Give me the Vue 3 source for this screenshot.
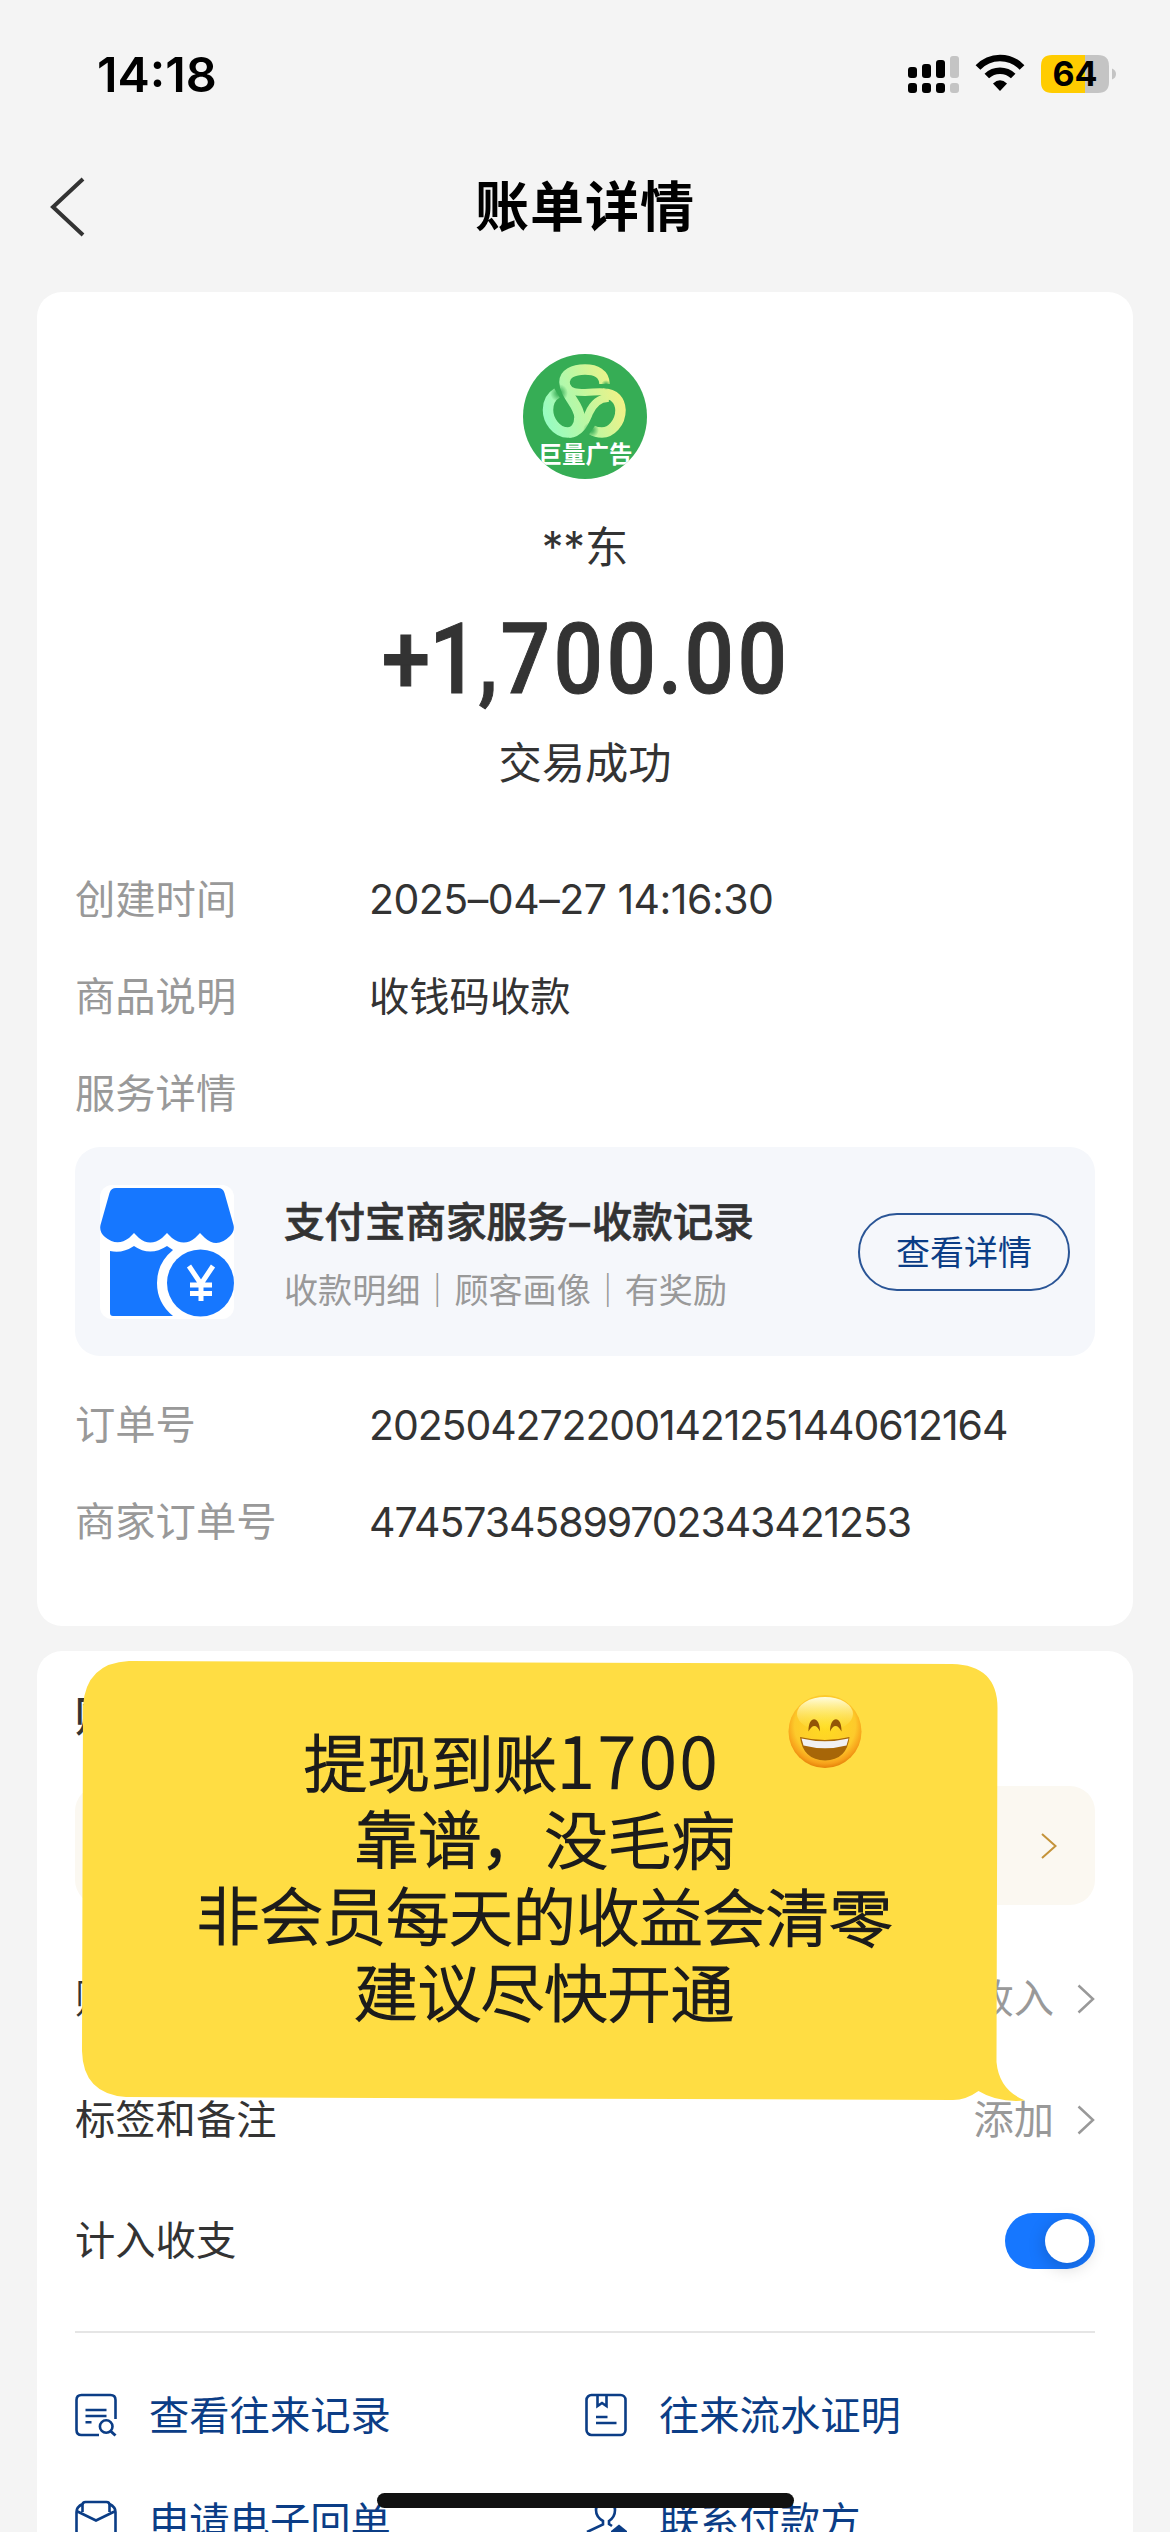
<script setup>
import { ref } from 'vue'

const createdRows = [
  { label: '创建时间', value: '2025–04–27 14:16:30', kind: 'date' },
  { label: '商品说明', value: '收钱码收款', kind: 'plain' },
  { label: '服务详情', value: '', kind: 'plain' },
]
const orderRows = [
  { label: '订单号', value: '2025042722001421251440612164', kind: 'num' },
  { label: '商家订单号', value: '47457345899702343421253', kind: 'num' },
]
const noteLines = ['靠谱，没毛病', '非会员每天的收益会清零', '建议尽快开通']
const counted = ref(true)
</script>

<template>
  <main class="screen">
    <header class="status">
      <span class="clock">14:18</span>
      <svg class="status-icons" width="210" height="40" viewBox="0 0 210 40">
        <g fill="#000">
          <rect x="0" y="13" width="9" height="11" rx="3" />
          <rect x="14" y="10" width="9" height="14" rx="3" />
          <rect x="28" y="6" width="9" height="18" rx="3" />
          <rect x="0" y="29" width="9" height="10" rx="3" />
          <rect x="14" y="29" width="9" height="10" rx="3" />
          <rect x="28" y="29" width="9" height="10" rx="3" />
        </g>
        <g fill="#c4c4c4">
          <rect x="42" y="2" width="9" height="22" rx="3" />
          <rect x="42" y="29" width="9" height="10" rx="3" />
        </g>
        <path d="M70 13.500A30 30 0 0 1 114 13.500" fill="none" stroke="#000" stroke-width="6.500" />
        <path d="M78.800 22A19 19 0 0 1 105.200 22" fill="none" stroke="#000" stroke-width="6.500" />
        <path d="M85 29.500Q92 23 99 29.500L92 37Z" fill="#000" />
        <path d="M144 1H177V39H144Q133 39 133 28V12Q133 1 144 1Z" fill="#ffcc00" />
        <path d="M177 1H190Q201 1 201 12V28Q201 39 190 39H177Z" fill="#c4c4c4" />
        <path d="M204 14.500Q208 16 208 20T204 25.500Z" fill="#c4c4c4" />
        <text x="167" y="32" text-anchor="middle" class="battery-text">64</text>
      </svg>
    </header>

    <nav class="titlebar">
      <svg class="back" width="38" height="60" viewBox="0 0 38 60">
        <path d="M35 2L5 30L35 58" fill="none" stroke="#333" stroke-width="4" />
      </svg>
      <h1>账单详情</h1>
    </nav>

    <section class="card bill">
      <svg class="avatar" width="124" height="125" viewBox="0 0 124 125">
        <defs>
          <linearGradient id="ribbon" gradientUnits="userSpaceOnUse" x1="24" y1="68" x2="98" y2="42">
            <stop offset="0" stop-color="#98fcc1" />
            <stop offset=".5" stop-color="#bdf7a2" />
            <stop offset="1" stop-color="#f0f287" />
          </linearGradient>
          <radialGradient id="shade">
            <stop offset="0" stop-color="#36ad55" />
            <stop offset=".3" stop-color="#36ad55" stop-opacity=".8" />
            <stop offset="1" stop-color="#36ad55" stop-opacity="0" />
          </radialGradient>
          <clipPath id="disc"><ellipse cx="62" cy="62.500" rx="62" ry="62.500" /></clipPath>
        </defs>
        <g clip-path="url(#disc)">
          <rect width="124" height="125" fill="#36ad55" />
          <g fill="none" stroke="url(#ribbon)" stroke-width="10.500">
            <path d="M81.500 30C81.500 20 73 15.500 62 15.500C50 15.500 41.500 20 41.500 28C42 42 56 50 56.500 63C56.500 73 51 78.500 45 78.500C33 78.500 25 66 25 56C25 48 29 42 34 39" />
            <path stroke-width="7" d="M44 32C47 38.500 54 38.500 62 38.500C70 38.500 74 37 82 38" />
            <path d="M80 39.500C92 39.500 97 47 97.500 56C97.500 69 88 78.500 79 78.500C75 78.500 72 78 69 76" />
            <path stroke-width="8" d="M46 80C58 79 62 68 66 59C70 50 77 43.500 86 44" />
          </g>
          <circle cx="83" cy="31" r="5" fill="url(#shade)" />
          <circle cx="36" cy="39" r="9" fill="url(#shade)" />
          <circle cx="68" cy="76" r="8" fill="url(#shade)" />
          <text x="62.500" y="109" text-anchor="middle" class="avatar-text">巨量广告</text>
        </g>
      </svg>
      <p class="payee">**东</p>
      <p class="amount"><span>+</span><span>1</span><span>,</span><span>7</span><span>0</span><span>0</span><span>.</span><span>0</span><span>0</span></p>
      <p class="state">交易成功</p>

      <dl class="facts first">
        <div v-for="row in createdRows" :key="row.label" class="fact">
          <dt>{{ row.label }}</dt>
          <dd :class="row.kind">{{ row.value }}</dd>
        </div>
      </dl>

      <div class="service">
        <svg class="shop" width="134" height="134" viewBox="0 0 134 134">
          <rect width="134" height="134" rx="12" fill="#fff" />
          <path fill="#1677ff" d="M16 3H118Q123 3 124.500 8L133.500 40Q135 46 130 51Q117 64 105 53L100 48L95 53Q84 62 72 53L67 48L62 53Q50 62 39 53L34 48L29 53Q17 62 5 52Q-1 47 .5 40L9.500 8Q11 3 16 3Z" />
          <path fill="#1677ff" d="M10 66Q22 69 34 61Q50 72 67 61L73 65Q57 78 57 98T73 131H13Q10 131 10 128Z" />
          <circle cx="100.500" cy="98" r="33.500" fill="#1677ff" />
          <path d="M89 81L101 99L113 81M101 98V116M90 100H112M90 108.500H112" fill="none" stroke="#fff" stroke-width="5" />
        </svg>
        <div class="service-copy">
          <strong>支付宝商家服务<i>–</i>收款记录</strong>
          <span>收款明细｜顾客画像｜有奖励</span>
        </div>
        <button class="detail">查看详情</button>
      </div>

      <dl class="facts second">
        <div v-for="row in orderRows" :key="row.label" class="fact">
          <dt>{{ row.label }}</dt>
          <dd :class="row.kind">{{ row.value }}</dd>
        </div>
      </dl>
    </section>

    <section class="card manage">
      <h2>账单管理</h2>
      <div class="promo">
        <svg width="18" height="28" viewBox="0 0 18 28"><path d="M2 2L15.500 14L2 26" fill="none" stroke="#c4933a" stroke-width="2" /></svg>
      </div>
      <div class="row category">
        <span>账单分类</span>
        <div class="more"><span>收入</span><svg width="18" height="30" viewBox="0 0 18 30"><path d="M1.500 1.500L16 15L1.500 28.500" fill="none" stroke="#999" stroke-width="2.500" /></svg></div>
      </div>
      <div class="row">
        <span>标签和备注</span>
        <div class="more"><span>添加</span><svg width="18" height="30" viewBox="0 0 18 30"><path d="M1.500 1.500L16 15L1.500 28.500" fill="none" stroke="#999" stroke-width="2.500" /></svg></div>
      </div>
      <div class="row">
        <span>计入收支</span>
        <button class="switch" :class="{ on: counted }" aria-label="计入收支" @click="counted = !counted"><b></b></button>
      </div>
      <div class="links">
        <a>
          <svg width="42" height="44" viewBox="0 0 42 44" fill="none" stroke="#0b3d86" stroke-width="2.600">
            <path d="M40.500 26V7Q40.500 2 35.500 2H6.500Q1.500 2 1.500 7V37Q1.500 42 6.500 42H24M10.500 17H31.500M10.500 23H31.500M10.500 29.300H16.500" />
            <circle cx="31.200" cy="33.500" r="6.300" /><path d="M35.500 38L40.500 42.500" stroke-width="3" />
          </svg><span>查看往来记录</span>
        </a>
        <a>
          <svg width="42" height="44" viewBox="0 0 42 44" fill="none" stroke="#0b3d86" stroke-width="2.600">
            <rect x="1.500" y="2" width="39" height="40" rx="5" />
            <path d="M12.500 2V13L17 10L21.500 13V2" /><path d="M11 24H22.500M11 30H31.500" />
          </svg><span>往来流水证明</span>
        </a>
        <a>
          <svg width="42" height="44" viewBox="0 0 42 44" fill="none" stroke="#0b3d86" stroke-width="2.600">
            <path d="M7.500 13V6Q7.500 3 10.500 3H31.500Q34.500 3 34.500 6V13M7.500 5Q1.500 8 1.500 13V42H40.500V13Q40.500 8 34.500 5M1.500 12L21 21.500L40.500 12" />
          </svg><span>申请电子回单</span>
        </a>
        <a>
          <svg width="42" height="44" viewBox="0 0 42 44" fill="none" stroke="#0b3d86" stroke-width="2.600">
            <path d="M2 33L18 25.500V22Q11 18 11 11Q11 1.500 20.500 1.500T30 11Q30 18 24 22V25L27 27" />
            <path d="M26 32L34 25.500L42 32V40H26Z" fill="#0b3d86" stroke="none" />
          </svg><span>联系付款方</span>
        </a>
      </div>
    </section>

    <aside class="note">
      <svg class="bubble" width="946" height="444" viewBox="80 1659 946 444">
        <path fill="#ffdd43" d="M129 1661L952 1664Q997.500 1665 997.500 1708L996.500 2062Q999 2090 1025 2100.500Q998 2103 978.500 2091Q966 2100 953 2100L126 2097Q83 2094 82 2051L83 1706Q86 1663 129 1661Z" />
      </svg>
      <div class="note-text">
        <p class="lead">提现到账<span>1700</span></p>
        <p v-for="line in noteLines" :key="line">{{ line }}</p>
      </div>
      <svg class="smile" width="74" height="75" viewBox="0 0 74 75">
        <defs>
          <radialGradient id="face" cx=".5" cy=".42" r=".58">
            <stop offset="0" stop-color="#ffdc20" /><stop offset=".72" stop-color="#fdca2b" /><stop offset=".9" stop-color="#f7a01a" /><stop offset="1" stop-color="#e58109" />
          </radialGradient>
          <linearGradient id="shine" x2="0" y2="1">
            <stop offset="0" stop-color="#fffde0" /><stop offset="1" stop-color="#fff35a" stop-opacity="0" />
          </linearGradient>
        </defs>
        <circle cx="37" cy="37.500" r="36.500" fill="url(#face)" />
        <ellipse cx="37" cy="20" rx="28" ry="17" fill="url(#shine)" />
        <path d="M20.500 37.500C20 21 32 21 32 37.500C29 30 24 30 20.500 37.500ZM42 37.500C42 21 54 21 53.500 37.500C50 30 45 30 42 37.500Z" fill="#935507" />
        <path d="M12 43Q37 49 61.500 43Q59 66 37 66.500Q15 66 12 43Z" fill="#a76608" />
        <path d="M13.500 44.500Q37 50 60.500 44.500L58.500 51.500Q37 57 15.500 51.500Z" fill="#f1f1f4" />
      </svg>
    </aside>
    <div class="home"></div>
  </main>
</template>

<style>
body { margin: 0; background: #f4f4f4; }
</style>

<style scoped>
.screen {
  position: relative;
  width: 1170px;
  height: 2532px;
  overflow: hidden;
  background: #f4f4f4;
  color: #333;
  font-family: Inter, "Noto Sans CJK SC", sans-serif;
  font-size: 40.3px;
}
.screen * { box-sizing: border-box; }
p, h1, h2, dl, dd { margin: 0; }
button { padding: 0; font-family: inherit; }

.status { display: flex; justify-content: space-between; height: 150px; padding: 54px 52px 0 97px; }
.clock { height: 42px; font-size: 48.5px; font-weight: 600; line-height: 41px; color: #000; }
.status-icons { flex: none; }
.battery-text { font-size: 34px; font-weight: 700; font-family: Inter, sans-serif; }

.titlebar { display: flex; align-items: center; height: 142px; padding: 0 48px 28px; }
.back { margin-right: -38px; }
h1 { flex: 1; padding-top: 2px; text-align: center; font-size: 54px; font-weight: 700; line-height: 60px; letter-spacing: 1px; color: #000; }

.card { display: flex; flex-direction: column; margin: 0 37px; padding: 0 38px; border-radius: 25px; background: #fff; }
.bill { align-items: stretch; height: 1334px; padding-top: 62px; }
.avatar { align-self: center; }
.avatar-text { font: 700 23.5px "Noto Sans CJK SC", sans-serif; fill: #fff; }
.payee { margin-top: 38px; height: 60px; text-align: center; font-size: 43.3px; line-height: 60px; }
.amount { display: flex; justify-content: center; height: 112px; margin-top: 27px; font-family: Roboto, sans-serif; font-size: 98px; font-weight: 500; line-height: 112px; -webkit-text-stroke: 1px #333; }
.amount span { display: flex; justify-content: center; width: 52.8px; transform: scaleX(.89); }
.amount span:nth-child(1) { width: 50px; }
.amount span:nth-child(2) { width: 46px; }
.amount span:nth-child(3) { width: 22px; }
.amount span:nth-child(7) { width: 26px; }
.state { margin-top: 17px; height: 60px; text-align: center; font-size: 43.3px; line-height: 60px; }

.facts { display: flex; flex-direction: column; }
.first { margin-top: 58px; }
.second { margin-top: 20px; }
.fact { display: flex; align-items: center; height: 97px; }
dt { width: 294px; padding-bottom: 6px; color: #999; }
.plain { padding-bottom: 6px; }
.date { padding-bottom: 1px; font-size: 41px; letter-spacing: -.5px; }
.num { font-size: 41px; letter-spacing: -1.1px; }

.service { display: flex; align-items: center; height: 209px; margin-top: 5px; padding: 0 25px; border-radius: 25px; background: #f5f7fb; }
.service-copy { display: flex; flex-direction: column; flex: 1; margin-left: 50px; padding-top: 10px; }
.service-copy strong { font-size: 40.5px; font-weight: 500; line-height: 60px; white-space: nowrap; -webkit-text-stroke: .7px #333; }
.service-copy i { margin: 0 2px; font-style: normal; }
.service-copy span { margin-top: 8px; font-size: 34.1px; line-height: 60px; color: #999; white-space: nowrap; }
.detail { flex: none; width: 212px; height: 78px; padding-bottom: 2px; border: 2px solid #2a5596; border-radius: 39px; background: none; color: #0b3d86; font-size: 34px; }

.manage { height: 1000px; margin-top: 25px; }
h2 { height: 135px; padding-top: 36px; font-size: 42px; font-weight: 700; line-height: 60px; }
.promo { display: flex; align-items: center; justify-content: flex-end; height: 119px; margin-bottom: 33px; padding-right: 37px; border-radius: 25px; background: #fbf8f1; }
.row { display: flex; align-items: center; justify-content: space-between; height: 121px; }
.row span { padding-bottom: 6px; }
.more { display: flex; align-items: center; gap: 23px; color: #999; }
.switch { width: 90px; height: 56px; padding: 6px; border: 0; border-radius: 28px; background: #ccc; }
.switch.on { background: #1677ff; }
.switch b { display: block; width: 44px; height: 44px; border-radius: 50%; background: #fff; box-shadow: 0 4px 18px rgba(0, 0, 0, .2); }
.switch.on b { margin-left: 34px; }
.links { display: grid; grid-template-columns: 1fr 1fr; grid-auto-rows: 106px; margin-top: 30px; padding-top: 29px; border-top: 2px solid #e5e5e5; }
.links a { display: flex; align-items: center; gap: 32px; color: #0b3d86; }
.links span { padding-bottom: 6px; }

.note { position: absolute; left: 80px; top: 1659px; width: 946px; height: 444px; }
.bubble { display: block; }
.note-text { position: absolute; left: 0; top: 64px; width: 929px; text-align: center; color: #1c1c1c; font-family: "Noto Sans CJK SC", sans-serif; font-size: 63.3px; font-weight: 300; line-height: 76.400px; -webkit-text-stroke: 1.800px #1c1c1c; stroke-linejoin: round; transform: rotate(.2deg); }
.note-text p { height: 76.400px; }
.lead { padding-right: 65px; }
.lead span { font-size: 70px; letter-spacing: 3.500px; line-height: 1; }
.smile { position: absolute; left: 708px; top: 35px; }
.home { position: absolute; left: 377px; top: 2493px; width: 417px; height: 15px; border-radius: 8px; background: #111; }
</style>
